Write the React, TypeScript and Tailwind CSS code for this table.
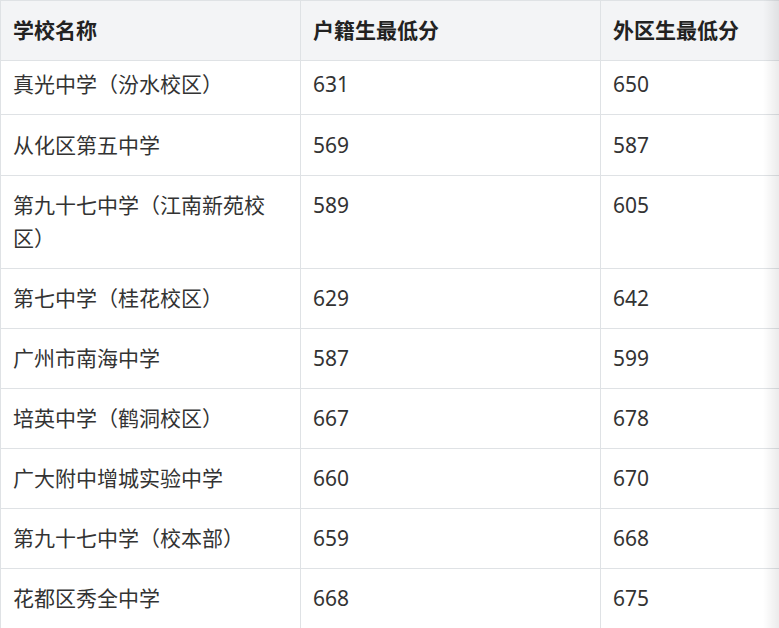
import React from "react";

const rows: [string, string, string][] = [
  ["真光中学（汾水校区）", "631", "650"],
  ["从化区第五中学", "569", "587"],
  ["第九十七中学（江南新苑校区）", "589", "605"],
  ["第七中学（桂花校区）", "629", "642"],
  ["广州市南海中学", "587", "599"],
  ["培英中学（鹤洞校区）", "667", "678"],
  ["广大附中增城实验中学", "660", "670"],
  ["第九十七中学（校本部）", "659", "668"],
  ["花都区秀全中学", "668", "675"],
];

function cellClass(i: number) {
  if (i === 0) return "border border-[#dfe2e5] px-3 pt-[7px] pb-[13px] align-top";
  if (i === 1) return "border border-[#dfe2e5] px-3 pt-[14px] pb-[13px] align-top";
  return "border border-[#dfe2e5] px-3 py-[13px] align-top";
}

export default function App() {
  return (
    <div
      className="relative w-[779px] h-[628px] overflow-hidden bg-white"
      style={{ fontFamily: '"Noto Sans", "Noto Sans CJK SC", sans-serif' }}
    >
      <table className="table-fixed border-collapse w-[900px] text-[21px] leading-[33px]">
        <colgroup>
          <col className="w-[300px]" />
          <col className="w-[300px]" />
          <col className="w-[300px]" />
        </colgroup>
        <thead>
          <tr className="bg-[#f3f4f6]">
            {["学校名称", "户籍生最低分", "外区生最低分"].map((h) => (
              <th
                key={h}
                className="border border-[#dfe2e5] px-3 py-[13px] text-left font-bold text-[#222]"
              >
                {h}
              </th>
            ))}
          </tr>
        </thead>
        <tbody className="text-[#333]">
          {rows.map((r, i) => (
            <tr key={i}>
              {r.map((c, j) => (
                <td key={j} className={cellClass(i)}>
                  {c}
                </td>
              ))}
            </tr>
          ))}
        </tbody>
      </table>
      <div className="pointer-events-none absolute right-0 top-0 h-full w-[16px] bg-gradient-to-r from-transparent to-[#00000014]" />
    </div>
  );
}
